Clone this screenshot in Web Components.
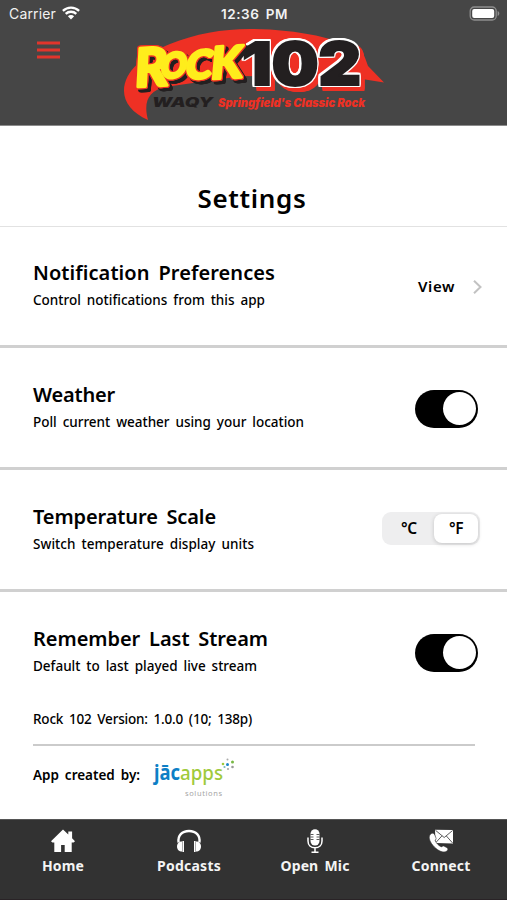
<!DOCTYPE html>
<html lang="en">
<head>
<meta charset="utf-8">
<title>Settings</title>
<style>
    body {
        margin: 0;
        background: #fff;
        color: #000;
        font-family: "Noto Sans", "Open Sans", sans-serif;
    }
</style>
</head>
<body>

<settings-app>
    <app-header slot="header"></app-header>
    <page-title width="109">Settings</page-title>

    <setting-row class="first" label="Notification Preferences" label-width="242" hint="Control notifications from this app" hint-width="232">
        <view-link></view-link>
    </setting-row>
    <setting-row label="Weather" label-width="82" hint="Poll current weather using your location" hint-width="271">
        <toggle-switch></toggle-switch>
    </setting-row>
    <setting-row label="Temperature Scale" label-width="183" hint="Switch temperature display units" hint-width="221">
        <unit-picker></unit-picker>
    </setting-row>
    <setting-row class="last" label="Remember Last Stream" label-width="235" hint="Default to last played live stream" hint-width="224">
        <toggle-switch></toggle-switch>
    </setting-row>

    <app-credits></app-credits>

    <tab-bar slot="footer">
        <tab-item width="42" label="Home">
            <svg width="26" height="24" viewBox="0 0 26 24" fill="#fff">
                <path d="M13 .5 1 12.2l1.4 1.3h1.900V23h6.8v-7h3.600v7H21.700v-9.5h1.900l1.4-1.3-2.9-2.9V2.500h-3.8v3.100z"/>
            </svg>
        </tab-item>
        <tab-item width="64" label="Podcasts">
            <svg width="26" height="24" viewBox="0 0 26 24" fill="#fff">
                <path d="M2.600 13.500C1.500 6.500 6 2 13 2s11.500 4.500 10.400 11.500" fill="none" stroke="#fff" stroke-width="2.400"/>
                <path d="M6 12.500v10C3 22.500 1 20.500 1 17.500s2-5 5-5z"/>
                <path d="M20 12.500v10c3 0 5-2 5-5s-2-5-5-5z"/>
                <path d="M7.200 12v11M18.800 12v11" stroke="#fff" stroke-width="1.600"/>
            </svg>
        </tab-item>
        <tab-item width="69" label="Open Mic">
            <svg width="26" height="24" viewBox="0 0 26 24">
                <rect x="8.500" y=".3" width="9" height="16.200" rx="4.500" fill="#fff"/>
                <path d="M8.500 5.500h3M8.500 8h3M8.500 10.500h3M14.500 5.500h3M14.500 8h3M14.500 10.500h3" stroke="#323232" stroke-width=".8"/>
                <path d="M6 8.500v3.500c0 4 2.800 6.800 7 6.800s7-2.800 7-6.800V8.500M13 18.800V23M9.500 23.200h7" fill="none" stroke="#fff" stroke-width="1.500"/>
            </svg>
        </tab-item>
        <tab-item width="59" label="Connect">
            <svg width="26" height="24" viewBox="0 0 26 24">
                <path d="M7 .7 25 1v13.500L7.500 14z" fill="#fff"/>
                <path d="m7.500 1.300 8.700 7.200L24.600 1.500M7.800 13.600l6.200-6.800M24.600 14l-6.200-7" fill="none" stroke="#323232" stroke-width=".8"/>
                <path d="M3.500 4.500C.5 6 .6 10 3.500 14.500c3.500 5 8.500 8.600 12.500 8.500 2 0 3.300-1 3.800-2.200.3-1-.2-1.700-1.200-2.300l-2.400-1.300c-1-.5-1.800-.2-2.500.7-2.500-.6-6-4.300-6.700-6.700 1-.5 1.400-1.300.9-2.400L6.800 6C6 4.400 5 3.900 3.500 4.500z" fill="#fff" stroke="#323232" stroke-width=".6"/>
            </svg>
        </tab-item>
    </tab-bar>
</settings-app>

<script>
class SettingsApp extends HTMLElement {

    constructor() {
        super()
        this.attachShadow({mode: "open"}).innerHTML = /* html */`
            <style>
                :host {
                    display: flex;
                    flex-direction: column;
                    height: 900px;
                    overflow: hidden;
                }

                main {
                    flex: 1;
                }
            </style>
            <slot name="header"></slot>
            <main><slot></slot></main>
            <slot name="footer"></slot>
        `
    }
}

class AppHeader extends HTMLElement {

    constructor() {
        super()
        this.attachShadow({mode: "open"}).innerHTML = /* html */`
            <style>
                :host {
                    display: block;
                    box-sizing: border-box;
                    height: 126px;
                    background: #464646;
                    border-bottom: 1px solid #8b8b8b;
                }

                .bar {
                    display: grid;
                    grid-template-columns: 120px 268px 1fr;
                }

                .menu {
                    margin: 13px 0 0 37px;
                }
            </style>
            <status-bar></status-bar>
            <div class="bar">
                <svg class="menu" width="23" height="19" stroke="#e0352c" stroke-width="3">
                    <path d="M0 2h23M0 9h23M0 16h23"/>
                </svg>
                <station-logo></station-logo>
            </div>
        `
    }
}

class StatusBar extends HTMLElement {

    constructor() {
        super()
        this.attachShadow({mode: "open"}).innerHTML = /* html */`
            <style>
                :host {
                    display: grid;
                    grid-template-columns: 1fr auto 1fr;
                    align-items: center;
                    height: 28px;
                    padding: 0 7px 0 9px;
                    box-sizing: border-box;
                    color: #f2f2f2;
                    font: 14px/28px Inter, "Liberation Sans", sans-serif;
                }

                .carrier {
                    display: flex;
                    align-items: center;
                    gap: 6px;
                }

                .time {
                    font-size: 13.500px;
                    font-weight: 600;
                }

                .battery {
                    justify-self: end;
                    margin-top: -2px;
                }

                svg {
                    display: block;
                    margin-top: -2px;
                }
            </style>
            <div class="carrier">
                <fit-text width="47">Carrier</fit-text>
                <svg width="18" height="14" viewBox="0 0 18 14" fill="none" stroke="#fff" stroke-width="2.300">
                    <path d="M.9 4.900a11.600 11.600 0 0 1 16.200 0M3.700 7.900a7.600 7.600 0 0 1 10.600 0"/>
                    <path d="M9 13.400 5.900 10.300a4.400 4.400 0 0 1 6.200 0z" fill="#fff" stroke="none"/>
                </svg>
            </div>
            <fit-text class="time" width="67">12:36 PM</fit-text>
            <svg class="battery" width="31" height="15" viewBox="0 0 31 15">
                <rect x="1.200" y="1" width="26" height="13" rx="4" fill="none" stroke="#8e8e8e" stroke-width="1.300"/>
                <rect x="3.200" y="3" width="22" height="9" rx="2" fill="#fff"/>
                <path d="M28.600 5v5c1.200-.5 1.700-1.400 1.700-2.500S29.800 5.500 28.600 5z" fill="#8e8e8e"/>
            </svg>
        `
    }
}

class StationLogo extends HTMLElement {

    constructor() {
        super()
        this.attachShadow({mode: "open"}).innerHTML = /* html */`
            <style>
                :host {
                    display: block;
                }

                svg {
                    display: block;
                }

                /* yellow face, red edge, dark shadow */
                .rock {
                    font-family: Lato, sans-serif;
                    font-weight: 900;
                    fill: #ffed1c;
                    stroke: #ffed1c;
                    stroke-width: 3;
                    stroke-linejoin: round;
                    filter: drop-shadow(1px 0 0 #ee3024) drop-shadow(-1px 0 0 #ee3024)
                        drop-shadow(0 1px 0 #ee3024) drop-shadow(0 -1px 0 #ee3024)
                        drop-shadow(3px 3px 0 #231f20);
                }

                .number {
                    font: 900 59px Inter, "Liberation Sans", sans-serif;
                    fill: #231f20;
                    stroke: #231f20;
                    stroke-width: 2;
                    filter: drop-shadow(1.200px 0 0 #fff) drop-shadow(-1.200px 0 0 #fff)
                        drop-shadow(0 1.200px 0 #fff) drop-shadow(0 -1.200px 0 #fff)
                        drop-shadow(4px 4px 0 #ee3024);
                }

                .call {
                    font: italic 900 12.500px Inter, "Liberation Sans", sans-serif;
                }

                .tagline {
                    font: italic 900 11.500px Inter, "Liberation Sans", sans-serif;
                }
            </style>
            <svg width="268" height="96" viewBox="120 28 268 96">
                <path d="M148 120C132 113 124 102 124 91c0-20 20-36 46-47C195 34 222 29 250 29c44 0 90 9 112 23 3 4 4 9 6 14L384 82.500 362 79 242 76l-77 11c-16 4-22 14-17 33z" fill="#ee3024"/>
                <text class="number" x="242" y="85" textLength="119" lengthAdjust="spacingAndGlyphs">102</text>
                <g class="rock">
                    <text transform="translate(134 87) rotate(-3) skewX(-6)" font-size="53" textLength="33" lengthAdjust="spacingAndGlyphs">R</text>
                    <text transform="translate(160 79) rotate(-6) skewX(-12)" font-size="34" textLength="26" lengthAdjust="spacingAndGlyphs">O</text>
                    <text transform="translate(184 79) rotate(-2) skewX(-12)" font-size="39" textLength="26" lengthAdjust="spacingAndGlyphs">C</text>
                    <text transform="translate(210 79) rotate(-3) skewX(-8)" font-size="44" textLength="31" lengthAdjust="spacingAndGlyphs">K</text>
                </g>
                <text class="call" x="152" y="107" textLength="61" lengthAdjust="spacingAndGlyphs" fill="#231f20">WAQY</text>
                <text class="tagline" x="218" y="107" textLength="147" lengthAdjust="spacingAndGlyphs" fill="#ee3024">Springfield's Classic Rock</text>
            </svg>
        `
    }
}

class PageTitle extends HTMLElement {

    constructor() {
        super()
        this.attachShadow({mode: "open"}).innerHTML = /* html */`
            <style>
                :host {
                    display: flex;
                    justify-content: center;
                    box-sizing: border-box;
                    height: 101px;
                    padding: 54px 3px 0 0;
                    border-bottom: 1px solid #e2e2e2;
                    font-size: 26px;
                    font-weight: 600;
                    line-height: 36px;
                }
            </style>
            <fit-text width="${this.getAttribute("width")}"><slot></slot></fit-text>
        `
    }
}

class SettingRow extends HTMLElement {

    constructor() {
        super()

        const label = this.getAttribute("label")
        const labelWidth = this.getAttribute("label-width")
        const hint = this.getAttribute("hint")
        const hintWidth = this.getAttribute("hint-width")

        this.attachShadow({mode: "open"}).innerHTML = /* html */`
            <style>
                :host {
                    display: flex;
                    justify-content: space-between;
                    box-sizing: border-box;
                    height: 122px;
                    padding: 33px 27px 0 33px;
                    border-bottom: 3px solid #d0d0d0;
                }

                :host(.first) {
                    height: 121px;
                    padding-top: 32px;
                }

                :host(.last) {
                    height: 112px;
                    border-bottom: 0;
                }

                .label {
                    font-size: 20px;
                    font-weight: 600;
                    line-height: 28px;
                }

                .hint {
                    margin-top: 3px;
                    font-size: 13.500px;
                    font-weight: 500;
                    line-height: 20px;
                }

                .control {
                    display: flex;
                    align-items: center;
                    height: 55px;
                }
            </style>
            <div>
                <div class="label"><fit-text width="${labelWidth}">${label}</fit-text></div>
                <div class="hint"><fit-text width="${hintWidth}">${hint}</fit-text></div>
            </div>
            <div class="control"><slot></slot></div>
        `
    }
}

class ViewLink extends HTMLElement {

    constructor() {
        super()
        this.attachShadow({mode: "open"}).innerHTML = /* html */`
            <style>
                :host {
                    display: flex;
                    align-items: center;
                    gap: 18px;
                    margin: -1px -2px 0 0;
                    font-size: 15px;
                    font-weight: 600;
                }

                svg {
                    margin-top: 2px;
                }
            </style>
            <fit-text width="37">View</fit-text>
            <svg width="9" height="14" viewBox="0 0 9 14" fill="none" stroke="#c2c2c2" stroke-width="2">
                <path d="m1 .8 6.500 6.200L1 13.200"/>
            </svg>
        `
    }
}

class ToggleSwitch extends HTMLElement {

    constructor() {
        super()
        this.attachShadow({mode: "open"}).innerHTML = /* html */`
            <style>
                :host {
                    display: flex;
                    align-items: center;
                    justify-content: flex-end;
                    box-sizing: border-box;
                    width: 63px;
                    height: 38px;
                    margin-right: 2px;
                    padding-right: 2px;
                    border-radius: 19px;
                    background: #000;
                }

                span {
                    width: 33.500px;
                    height: 33.500px;
                    border-radius: 50%;
                    background: #fff;
                }
            </style>
            <span></span>
        `
    }
}

class UnitPicker extends HTMLElement {

    constructor() {
        super()
        this.attachShadow({mode: "open"}).innerHTML = /* html */`
            <style>
                :host {
                    display: grid;
                    grid-template-columns: 1fr 44px;
                    box-sizing: border-box;
                    width: 98px;
                    height: 33px;
                    margin-bottom: 5px;
                    padding: 2px;
                    border-radius: 9px;
                    background: #eeeeef;
                    font-size: 15.500px;
                    font-weight: 600;
                    line-height: 29px;
                }

                span {
                    display: flex;
                    justify-content: center;
                    border-radius: 8px;
                }

                .on {
                    background: #fff;
                    box-shadow: 0 1px 4px rgba(0, 0, 0, .18);
                }
            </style>
            <span><fit-text width="16">°C</fit-text></span>
            <span class="on"><fit-text width="14">°F</fit-text></span>
        `
    }
}

class AppCredits extends HTMLElement {

    constructor() {
        super()
        this.attachShadow({mode: "open"}).innerHTML = /* html */`
            <style>
                :host {
                    display: block;
                    padding: 5px 32px 0 33px;
                }

                .version {
                    height: 35px;
                    border-bottom: 2px solid #cbcbcb;
                    font-size: 13.500px;
                    font-weight: 500;
                    line-height: 20px;
                }

                .author {
                    display: flex;
                    gap: 10px;
                    padding-top: 9px;
                    font-size: 13.500px;
                    font-weight: 600;
                    line-height: 40px;
                }
            </style>
            <div class="version"><fit-text width="219">Rock 102 Version: 1.0.0 (10; 138p)</fit-text></div>
            <div class="author">
                <fit-text width="107">App created by:</fit-text>
                <svg width="90" height="46" viewBox="150 755 90 46">
                    <g font-family="Noto Sans, sans-serif" font-size="20.500">
                        <text x="154" y="780" textLength="26" lengthAdjust="spacingAndGlyphs" font-weight="700" fill="#0d7fc6">jāc</text>
                        <text x="180" y="780" textLength="43" lengthAdjust="spacingAndGlyphs" font-weight="500" fill="#9fca3c">apps</text>
                    </g>
                    <text x="185" y="796" textLength="37" font-family="Noto Sans, sans-serif" font-size="7.500" font-weight="400" fill="#a5a5a5">solutions</text>
                    <g fill="#1b86c8">
                        <circle cx="227.500" cy="764.500" r="1.500"/>
                        <circle cx="223" cy="764" r="1.300" fill="#9fca3c"/>
                        <circle cx="232.500" cy="762" r="1.500" fill="#77b843"/>
                        <circle cx="227.500" cy="759.500" r="1" fill="#aaa"/>
                        <circle cx="224.500" cy="767" r="1.100" fill="#7bb"/>
                        <circle cx="228" cy="769" r="1.100" fill="#aaa"/>
                        <circle cx="232.500" cy="767" r="1.300" fill="#999"/>
                    </g>
                </svg>
            </div>
        `
    }
}

class TabBar extends HTMLElement {

    constructor() {
        super()
        this.attachShadow({mode: "open"}).innerHTML = /* html */`
            <style>
                :host {
                    display: grid;
                    grid-template-columns: repeat(4, 126px);
                    box-sizing: border-box;
                    height: 81px;
                    border-top: 1px solid #555;
                    border-bottom: 1px solid #292326;
                    background: #323232;
                    color: #f4f4f4;
                }
            </style>
            <slot></slot>
        `
    }
}

class TabItem extends HTMLElement {

    constructor() {
        super()
        this.attachShadow({mode: "open"}).innerHTML = /* html */`
            <style>
                :host {
                    display: flex;
                    flex-direction: column;
                    align-items: center;
                    padding-top: 9px;
                    font-size: 14px;
                    font-weight: 700;
                    line-height: 20px;
                }

                ::slotted(svg) {
                    display: block;
                    margin-bottom: 3px;
                }
            </style>
            <slot></slot>
            <fit-text width="${this.getAttribute("width")}">${this.getAttribute("label")}</fit-text>
        `
    }
}

// Tracks its text in or out so that the line is exactly "width" px long
class FitText extends HTMLElement {

    constructor() {
        super()
        this.attachShadow({mode: "open"}).innerHTML = /* html */`
            <style>
                :host {
                    display: block;
                    white-space: nowrap;
                }

                span {
                    display: inline-block;
                    word-spacing: .18em;
                }
            </style>
            <span><slot></slot></span>
        `
    }

    connectedCallback() {
        const width = Number(this.getAttribute("width"))
        const span = this.shadowRoot.querySelector("span")
        const host = this.getRootNode().host
        const text = this.textContent.trim() || host.textContent.trim()

        this.style.width = width + "px"
        const spacing = (width - span.getBoundingClientRect().width) / text.length
        span.style.letterSpacing = spacing + "px"
    }
}

customElements.define("settings-app", SettingsApp)
customElements.define("app-header", AppHeader)
customElements.define("status-bar", StatusBar)
customElements.define("station-logo", StationLogo)
customElements.define("page-title", PageTitle)
customElements.define("setting-row", SettingRow)
customElements.define("view-link", ViewLink)
customElements.define("toggle-switch", ToggleSwitch)
customElements.define("unit-picker", UnitPicker)
customElements.define("app-credits", AppCredits)
customElements.define("tab-bar", TabBar)
customElements.define("tab-item", TabItem)
customElements.define("fit-text", FitText)
</script>
</body>
</html>
